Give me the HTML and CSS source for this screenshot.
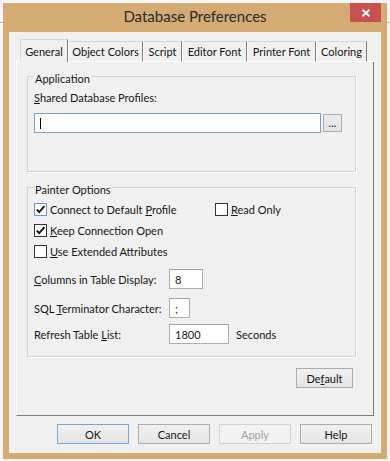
FILE: index.html
```html
<!DOCTYPE html>
<html lang="en">
<head>
<meta charset="utf-8">
<title>Database Preferences</title>
<link rel="stylesheet" href="styles.css">
</head>
<body>
<div class="window">
  <div class="titlebar">
    <div class="title">Database Preferences</div>
    <div class="close">
      <svg width="10" height="8" viewBox="0 0 10 8"><path d="M1.5 0.8 L8.5 7.2 M8.5 0.8 L1.5 7.2" stroke="#fff" stroke-width="1.9" fill="none"/></svg>
    </div>
  </div>
  <div class="client">
    <div class="tabs">
      <div class="tab-edge"></div>
      <div class="tab tab-selected tab-general">General</div>
      <div class="tab tab-objcolors">Object Colors</div>
      <div class="tab tab-script">Script</div>
      <div class="tab tab-editor">Editor Font</div>
      <div class="tab tab-printer">Printer Font</div>
      <div class="tab tab-coloring">Coloring</div>
      <div class="tab-fill"></div>
    </div>
    <div class="panel">
      <fieldset class="group group-app">
        <legend class="group-title">Application</legend>
        <div class="text-label"><u>S</u>hared Database Profiles:</div>
        <div class="profile-row">
          <div class="textbox textbox-focus textbox-profiles"><span class="caret"></span></div>
          <div class="browse">...</div>
        </div>
      </fieldset>
      <fieldset class="group group-painter">
        <legend class="group-title">Painter Options</legend>
        <div class="checks">
          <div class="check"><span class="box box-focus"><svg width="11" height="11" viewBox="0 0 11 11"><path d="M1.8 5.6 L4.2 8.2 L9.4 2.2" stroke="#111" stroke-width="1.9" fill="none"/></svg></span><span>Connect to Default <u>P</u>rofile</span></div>
          <div class="check"><span class="box"></span><span><u>R</u>ead Only</span></div>
          <div class="check"><span class="box"><svg width="11" height="11" viewBox="0 0 11 11"><path d="M1.8 5.6 L4.2 8.2 L9.4 2.2" stroke="#111" stroke-width="1.9" fill="none"/></svg></span><span><u>K</u>eep Connection Open</span></div>
          <div></div>
          <div class="check"><span class="box"></span><span><u>U</u>se Extended Attributes</span></div>
        </div>
        <div class="fields">
          <div class="field-row">
            <div class="field-label"><u>C</u>olumns in Table Display:</div>
            <div class="textbox textbox-columns">8</div>
          </div>
          <div class="field-row field-row-terminator">
            <div class="field-label">SQL <u>T</u>erminator Character:</div>
            <div class="textbox textbox-terminator">;</div>
          </div>
          <div class="field-row field-row-refresh">
            <div class="field-label">Refresh Table <u>L</u>ist:</div>
            <div class="textbox textbox-refresh">1800</div>
            <div class="unit">Seconds</div>
          </div>
        </div>
      </fieldset>
      <div class="panel-actions">
        <div class="btn btn-panel">De<u>f</u>ault</div>
      </div>
    </div>
    <div class="actions">
      <div class="btn btn-default">OK</div>
      <div class="btn">Cancel</div>
      <div class="btn btn-disabled">Apply</div>
      <div class="btn">Help</div>
    </div>
  </div>
</div>
</body>
</html>
```
FILE: styles.css
```css
* { box-sizing: border-box; }
html, body { margin: 0; }
body {
  width: 390px;
  height: 461px;
  overflow: hidden;
  padding: 3px 0 0 3px;
  background:
    linear-gradient(to bottom, transparent 22px, #a8a8a8 22px, #a8a8a8 23px, transparent 23px),
    #f5f5f5;
  font-family: "Lato", "Segoe UI", sans-serif;
  font-size: 11px;
  line-height: 13px;
  color: #161616;
}
.window {
  width: 384px;
  height: 456px;
  background: #d4ab73;
  padding: 0 6px 6px;
  display: flex;
  flex-direction: column;
}
.titlebar {
  height: 29px;
  display: grid;
  grid-template-columns: 1fr auto 1fr;
}
.title {
  grid-column: 2;
  font-size: 15px;
  line-height: 18px;
  padding-top: 4px;
  color: #2b2b2b;
  white-space: nowrap;
}
.close {
  grid-column: 3;
  justify-self: end;
  align-self: start;
  width: 31px;
  height: 19px;
  background: #c85151;
  display: flex;
  align-items: center;
  justify-content: center;
}
.close svg { display: block; }
.client {
  flex: 1;
  background: #f0f0f0;
  padding: 7px 7px 9px;
  display: flex;
  flex-direction: column;
}
.tabs {
  display: flex;
  align-items: flex-end;
  height: 23px;
}
.tab-edge { width: 4px; border-bottom: 1px solid #fff; }
.tab-fill { flex: 1; border-bottom: 1px solid #fff; }
.tab {
  height: 21px;
  border-top: 1px solid #d6d6d6;
  border-left: 1px solid #fff;
  border-right: 1px solid #7d7d7d;
  border-bottom: 1px solid #fff;
  display: flex;
  align-items: center;
  justify-content: center;
  white-space: nowrap;
}
.tab-selected {
  height: 23px;
  border-bottom: 0;
  border-left-color: #d6d6d6;
}
.tab-general { width: 48px; }
.tab-objcolors { width: 75px; }
.tab-script { width: 39px; }
.tab-editor { width: 65px; }
.tab-printer { width: 69px; }
.tab-coloring { width: 51px; }
.panel {
  height: 354px;
  border-left: 1px solid #fff;
  border-right: 1px solid #7a7a7a;
  border-bottom: 1px solid #7a7a7a;
  padding: 6px 17px 0 10px;
}
.group {
  margin: 0;
  min-width: 0;
  border: 1px solid #d3d3d3;
  box-shadow: 1px 1px 0 #fff;
  padding: 6px 6px 38px;
}
.group-title {
  padding: 4px 1px 0;
  line-height: 13px;
}
.group-painter {
  margin-top: 7px;
  padding: 7px 6px 12px;
}
.text-label { white-space: nowrap; }
.profile-row {
  display: flex;
  align-items: center;
  gap: 2px;
  margin-top: 9px;
}
.textbox {
  height: 20px;
  border: 1px solid #abadb3;
  border-top-color: #a0a3aa;
  background: #fff;
  padding: 0 5px;
  display: flex;
  align-items: center;
}
.textbox-focus { border-color: #7aa0cf; }
.textbox-profiles { width: 287px; }
.caret {
  width: 1px;
  height: 11px;
  background: #000;
}
.browse {
  width: 19px;
  height: 18px;
  border: 1px solid #adadad;
  background: linear-gradient(#ececec, #e2e2e2);
  display: flex;
  align-items: center;
  justify-content: center;
  font-size: 11px;
  line-height: 13px;
  padding-bottom: 1px;
}
.checks {
  display: grid;
  grid-template-columns: 181px auto;
  row-gap: 8px;
}
.check {
  display: flex;
  align-items: center;
  gap: 3px;
  height: 13px;
  white-space: nowrap;
}
.box {
  width: 13px;
  height: 13px;
  border: 1px solid #333;
  background: #fff;
  flex: none;
}
.box svg { display: block; }
.box-focus { border-color: #6b97c9; }
.fields { margin-top: 11px; }
.field-row {
  display: flex;
  align-items: center;
}
.field-row-terminator { margin-top: 9px; }
.field-row-refresh { margin-top: 6px; }
.field-label {
  width: 135px;
  white-space: nowrap;
}
.textbox-columns { width: 34px; }
.textbox-terminator { width: 21px; }
.textbox-refresh { width: 60px; }
.unit { margin-left: 7px; }
.panel-actions {
  display: flex;
  justify-content: flex-end;
  margin-top: 11px;
  padding-right: 3px;
}
.btn {
  width: 72px;
  height: 20px;
  border: 1px solid #acacac;
  background: linear-gradient(#f0f0f0, #e4e4e4);
  display: flex;
  align-items: center;
  justify-content: center;
  white-space: nowrap;
}
.btn-panel { width: 57px; }
.btn-default { border-color: #72a7dc; }
.btn-disabled {
  border-color: #d3d3d3;
  background: #f2f2f2;
  color: #a3a3a3;
}
.actions {
  display: flex;
  justify-content: flex-end;
  gap: 9px;
  margin-top: 8px;
  padding-right: 2px;
}
```
